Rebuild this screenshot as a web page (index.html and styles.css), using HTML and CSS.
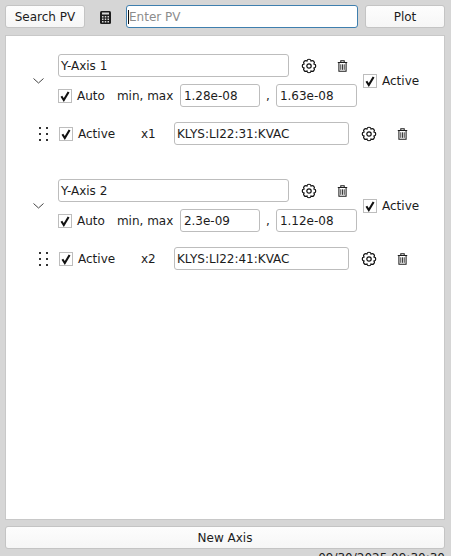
FILE: index.html
```html
<!DOCTYPE html>
<html lang="en">
<head>
    <meta charset="UTF-8">
    <meta name="viewport" content="width=device-width, initial-scale=1.0">
    <title>Axis Panel</title>
    <link rel="stylesheet" href="styles.css">
</head>
<body>
    <svg class="defs" width="0" height="0">
        <symbol id="gear" viewBox="0 0 16 16">
            <path d="M12.99 5.93A2.1 2.1 0 0 1 12.99 10.07A2.1 2.1 0 0 1 10.07 12.99A2.1 2.1 0 0 1 5.93 12.99A2.1 2.1 0 0 1 3.01 10.07A2.1 2.1 0 0 1 3.01 5.93A2.1 2.1 0 0 1 5.93 3.01A2.1 2.1 0 0 1 10.07 3.01A2.1 2.1 0 0 1 12.99 5.93Z" fill="none" stroke="#111" stroke-width="1.2"/>
            <circle cx="8" cy="8" r="2.2" fill="none" stroke="#111" stroke-width="1.2"/>
        </symbol>
        <symbol id="trash" viewBox="0 0 12 14">
            <path d="M.5 3h11M4 3V1h4V3M1.8 3.5V13h8.4V3.5" fill="none" stroke="#1c1c1c" stroke-width="1.2"/>
            <path d="M4 5v6.5M6 5v6.5M8 5v6.5" fill="none" stroke="#1c1c1c" stroke-width="1"/>
        </symbol>
        <symbol id="check" viewBox="0 0 14 14">
            <path d="M3.4 7.2 5.8 11 10.6 3" fill="none" stroke="#111" stroke-width="2.1"/>
        </symbol>
    </svg>

    <div class="topbar">
        <button class="btn search-btn">Search PV</button>
        <span class="calc">
            <svg width="11" height="13" viewBox="0 0 11 13">
                <rect width="11" height="13" rx="1.5" fill="#1c1c1c"/>
                <rect x="2" y="1.5" width="7" height="2" fill="#d6d6d6"/>
                <path d="M2 5h1.5v1.5H2zM4.75 5h1.5v1.5h-1.5zM7.5 5H9v1.5H7.5zM2 7.5h1.5V9H2zM4.75 7.5h1.5V9h-1.5zM7.5 7.5H9V9H7.5zM2 10h1.5v1.5H2zM4.75 10h1.5v1.5h-1.5zM7.5 10H9v1.5H7.5z" fill="#d6d6d6"/>
            </svg>
        </span>
        <div class="pv-input"><span class="caret"></span><span class="placeholder">Enter PV</span></div>
        <button class="btn plot-btn">Plot</button>
    </div>

    <div class="panel">
        <div class="axis">
            <div class="axis-head">
                <svg class="chevron" width="11" height="6" viewBox="0 0 11 6"><path d="M.5.5l5 4.5 5-4.5" fill="none" stroke="#444"/></svg>
                <div class="axis-rows">
                    <div class="row">
                        <div class="field name-field">Y-Axis 1</div>
                        <svg class="icon gear-a"><use href="#gear"/></svg>
                        <svg class="icon-trash trash-a"><use href="#trash"/></svg>
                    </div>
                    <div class="row">
                        <span class="box"><svg width="14" height="14"><use href="#check"/></svg></span>
                        <span class="label">Auto</span>
                        <span class="label minmax">min, max</span>
                        <div class="field num-field">1.28e-08</div>
                        <span class="comma">,</span>
                        <div class="field num-field wide">1.63e-08</div>
                    </div>
                </div>
                <div class="axis-active">
                    <span class="box"><svg width="14" height="14"><use href="#check"/></svg></span>
                    <span class="label">Active</span>
                </div>
            </div>
            <div class="row curve">
                <span class="grip"><i></i><i></i><i></i><i></i><i></i><i></i></span>
                <span class="box"><svg width="14" height="14"><use href="#check"/></svg></span>
                <span class="label active-label">Active</span>
                <span class="label var">x1</span>
                <div class="field pv-field">KLYS:LI22:31:KVAC</div>
                <svg class="icon gear-b"><use href="#gear"/></svg>
                <svg class="icon-trash trash-b"><use href="#trash"/></svg>
            </div>
        </div>

        <div class="axis">
            <div class="axis-head">
                <svg class="chevron" width="11" height="6" viewBox="0 0 11 6"><path d="M.5.5l5 4.5 5-4.5" fill="none" stroke="#444"/></svg>
                <div class="axis-rows">
                    <div class="row">
                        <div class="field name-field">Y-Axis 2</div>
                        <svg class="icon gear-a"><use href="#gear"/></svg>
                        <svg class="icon-trash trash-a"><use href="#trash"/></svg>
                    </div>
                    <div class="row">
                        <span class="box"><svg width="14" height="14"><use href="#check"/></svg></span>
                        <span class="label">Auto</span>
                        <span class="label minmax">min, max</span>
                        <div class="field num-field">2.3e-09</div>
                        <span class="comma">,</span>
                        <div class="field num-field wide">1.12e-08</div>
                    </div>
                </div>
                <div class="axis-active">
                    <span class="box"><svg width="14" height="14"><use href="#check"/></svg></span>
                    <span class="label">Active</span>
                </div>
            </div>
            <div class="row curve">
                <span class="grip"><i></i><i></i><i></i><i></i><i></i><i></i></span>
                <span class="box"><svg width="14" height="14"><use href="#check"/></svg></span>
                <span class="label active-label">Active</span>
                <span class="label var">x2</span>
                <div class="field pv-field">KLYS:LI22:41:KVAC</div>
                <svg class="icon gear-b"><use href="#gear"/></svg>
                <svg class="icon-trash trash-b"><use href="#trash"/></svg>
            </div>
        </div>
    </div>

    <button class="btn new-axis">New Axis</button>
    <div class="status">09/30/2025 09:30:30</div>
</body>
</html>
```

FILE: styles.css
```css
* {
    margin: 0;
    padding: 0;
    box-sizing: border-box;
}

html, body {
    height: 556px;
    overflow: hidden;
}

body {
    font-family: 'DejaVu Sans', sans-serif;
    font-size: 12px;
    color: #1c1c1c;
    background: #d6d6d6;
    padding: 5px 6px 0 5px;
    display: flex;
    flex-direction: column;
}

.defs {
    position: absolute;
}

.btn {
    font-family: inherit;
    font-size: 12px;
    color: #1c1c1c;
    height: 23px;
    background: linear-gradient(#fdfdfd, #f6f6f6);
    border: 1px solid #c4c4c4;
    border-radius: 3px;
}

.topbar {
    display: flex;
    align-items: center;
    height: 23px;
    flex-shrink: 0;
}

.search-btn {
    width: 80px;
}

.calc {
    width: 41px;
    display: flex;
    justify-content: center;
    padding: 1px 1px 0 0;
}

.pv-input {
    width: 232px;
    height: 23px;
    background: #fff;
    border: 1px solid #3f7fae;
    border-radius: 3px;
    display: flex;
    align-items: center;
    padding-left: 1px;
}

.caret {
    width: 1px;
    height: 14px;
    background: #111;
}

.placeholder {
    color: #8c8c8c;
}

.plot-btn {
    width: 80px;
    margin-left: 7px;
}

.panel {
    flex: 1;
    margin-top: 7px;
    background: #fff;
    border: 1px solid #c8c8c8;
    padding: 18px 0 0 27px;
}

.axis {
    height: 125px;
}

.axis-head {
    display: flex;
    align-items: center;
}

.chevron {
    margin-top: 1px;
    flex-shrink: 0;
}

.axis-rows {
    margin-left: 14px;
    width: 305px;
    display: flex;
    flex-direction: column;
    gap: 7px;
}

.row {
    display: flex;
    align-items: center;
    height: 23px;
}

.field {
    height: 23px;
    line-height: 22px;
    background: #fff;
    border: 1px solid #bdbdbd;
    border-radius: 3px;
    padding-left: 2px;
    white-space: nowrap;
}

.name-field {
    width: 231px;
}

.num-field {
    width: 80px;
    padding-left: 3px;
}

.num-field.wide {
    width: 81px;
}

.pv-field {
    width: 175px;
}

.comma {
    width: 16px;
    text-align: center;
}

.box {
    width: 14px;
    height: 14px;
    flex-shrink: 0;
    border: 1px solid #bdbdbd;
    background: #fff;
    display: block;
    position: relative;
}

.box svg {
    position: absolute;
    left: -1px;
    top: -1px;
}

.label {
    margin-left: 5px;
    white-space: nowrap;
}

.minmax {
    margin-left: 12px;
    width: 63px;
}

.icon {
    width: 16px;
    height: 16px;
    flex-shrink: 0;
}

.icon-trash {
    width: 11px;
    height: 12px;
    flex-shrink: 0;
}

.gear-a,
.gear-b {
    margin-left: 12px;
}

.trash-a,
.trash-b {
    margin-left: 20px;
}

.axis-active {
    display: flex;
    align-items: center;
}

.curve {
    margin-top: 15px;
    margin-left: 6px;
}

.grip {
    width: 9px;
    height: 14px;
    display: grid;
    grid-template-columns: 2px 2px;
    grid-template-rows: repeat(3, 2px);
    justify-content: space-between;
    align-content: space-between;
    flex-shrink: 0;
}

.grip i {
    background: #333;
}

.curve .box {
    margin-left: 11px;
}

.active-label {
    width: 49px;
}

.var {
    margin-left: 14px;
    width: 33px;
}

.new-axis {
    flex-shrink: 0;
    width: 440px;
    margin-top: 6px;
}

.status {
    flex-shrink: 0;
    width: 440px;
    text-align: right;
    margin-top: 1px;
    height: 6px;
    line-height: 16px;
}
```
